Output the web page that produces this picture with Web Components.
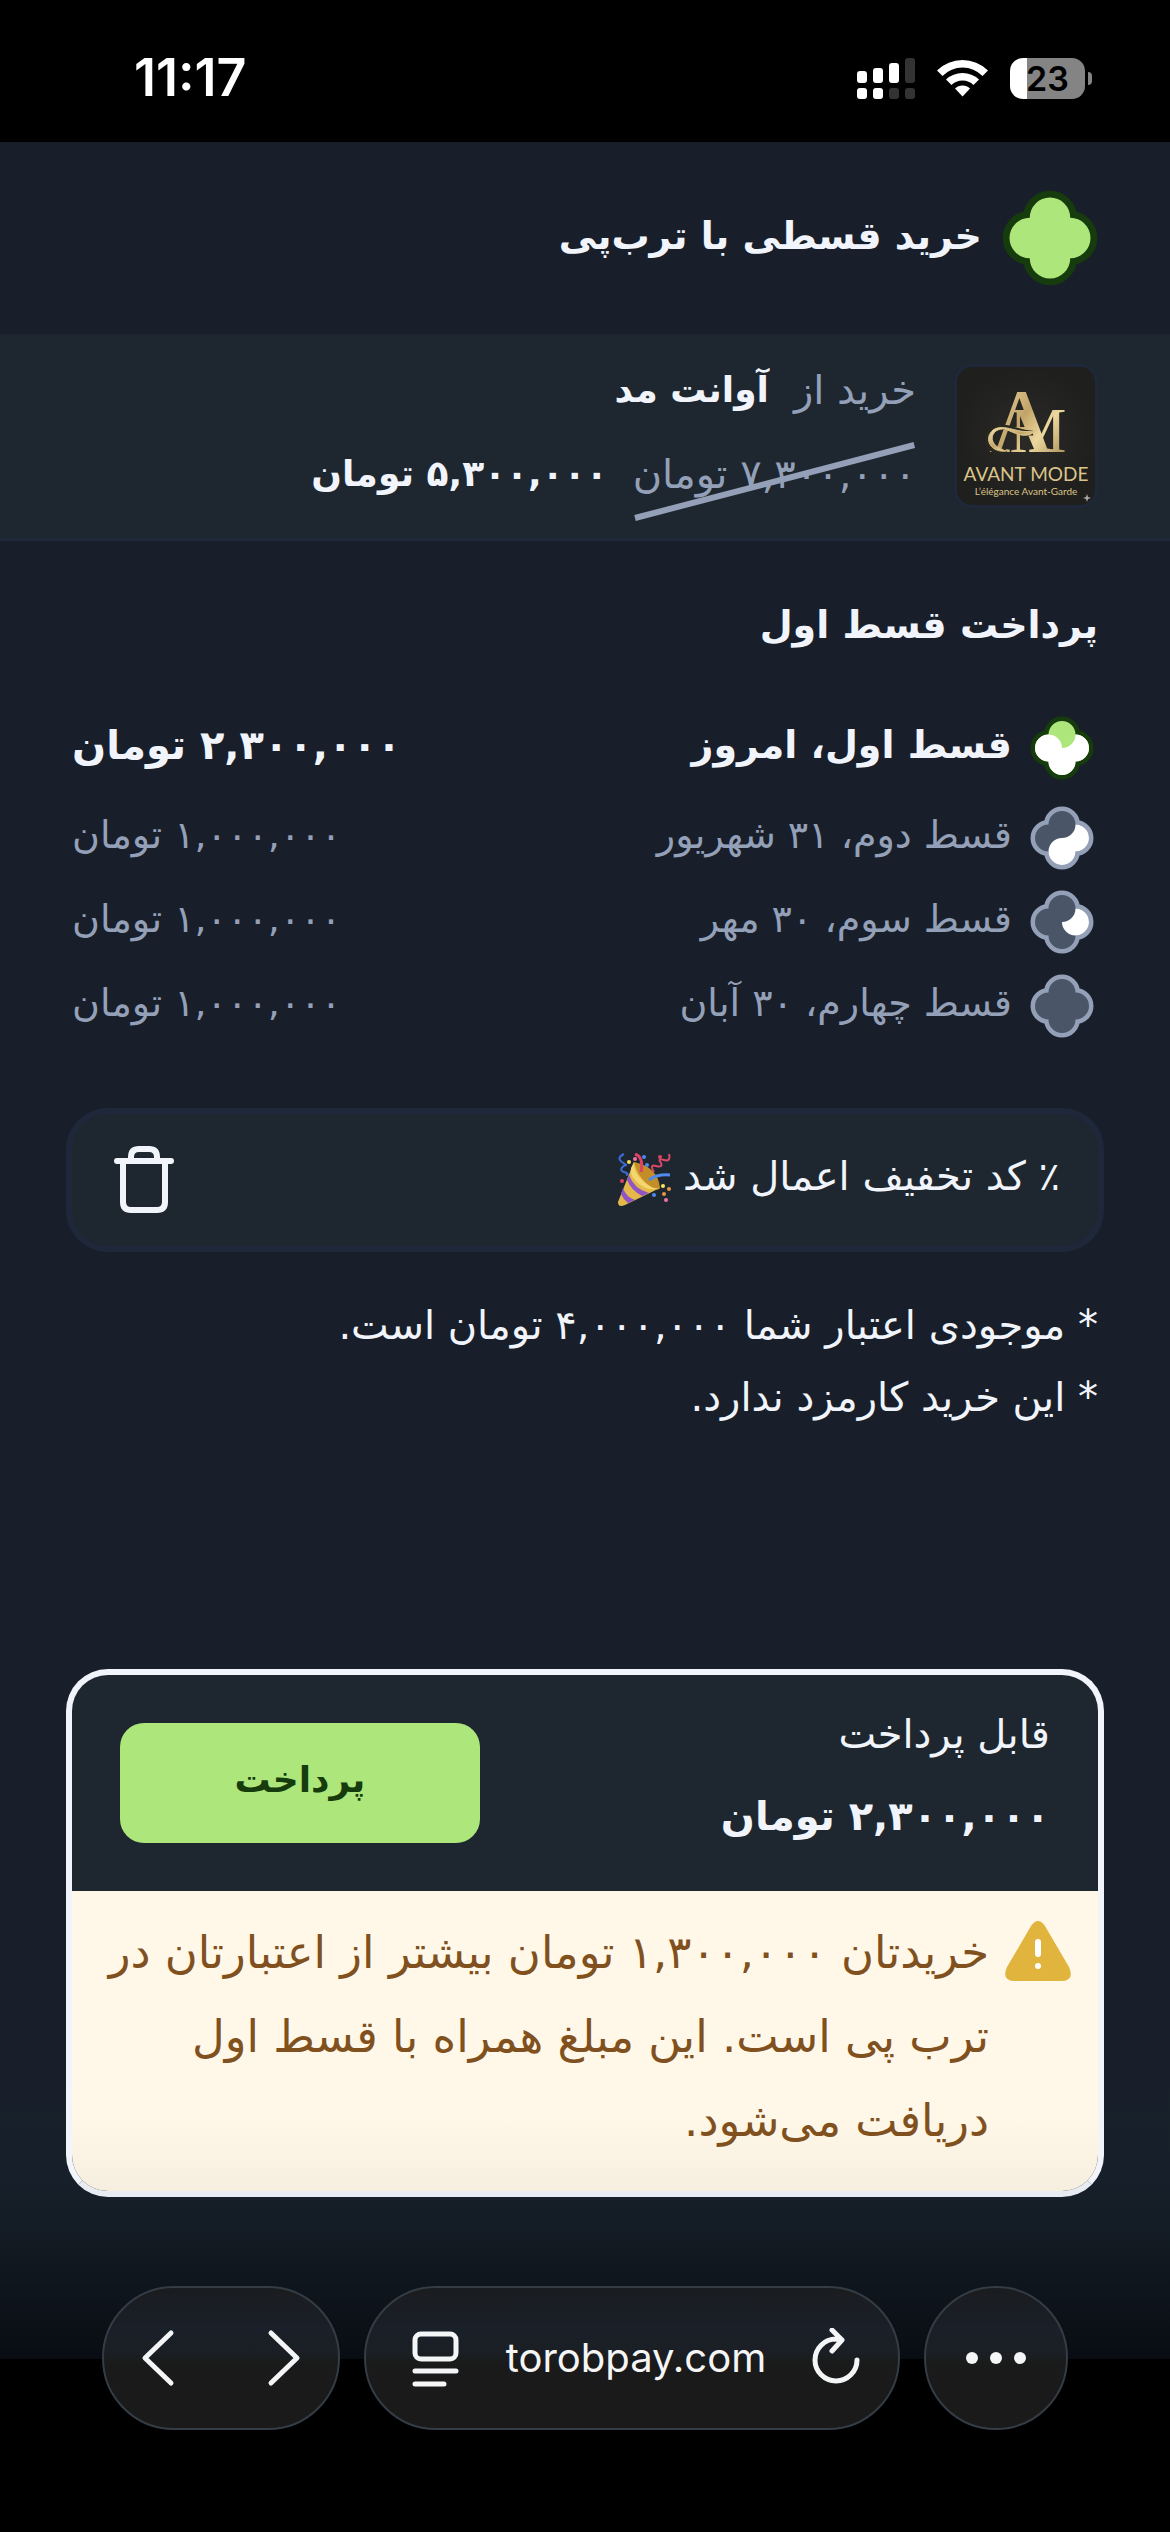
<!DOCTYPE html>
<html lang="fa" dir="rtl">
  <head>
    <meta charset="UTF-8" />
    <meta name="viewport" content="width=device-width, initial-scale=1.0" />
    <title>خرید قسطی با ترب‌پی</title>
    <style>
      :root {
        --page: #181f2a;
        --panel: #1e2730;
        --line: #1f283a;
        --text: #f1f5fb;
        --muted: #94a0b8;
        --green: #ade67a;
        --green-dark: #163b0c;
        --size-strong: 36px;
        --size-title: 38px;
        --size-body: 40px;
        --size-notice: 45px;
      }
      html {
        background: #000;
      }
      body {
        margin: 0;
        min-height: 100vh;
        display: flex;
        flex-direction: column;
        color: var(--text);
        font-family: 'DejaVu Sans', sans-serif;
        font-size: var(--size-body);
        line-height: 84px;
        background: linear-gradient(
          to top,
          #000 173px,
          #090d13 173px,
          #10171f 260px,
          #17202a 350px,
          var(--page) 480px
        );
      }
      main {
        flex: 1;
        display: flex;
        flex-direction: column;
        padding: 42px 66px 89px;
      }
      h2 {
        margin: 0 6px 33px;
        font-size: var(--size-title);
      }
    </style>
  </head>
  <body>
    <template id="status-bar">
      <style>
        :host {
          display: flex;
          align-items: center;
          justify-content: space-between;
          height: 142px;
          padding: 14px 78px 0 134px;
          box-sizing: border-box;
          direction: ltr;
          background: #000;
          color: #fff;
          font: 600 52px/60px Inter, sans-serif;
        }
        .icons {
          display: flex;
          align-items: center;
          gap: 22px;
        }
        .battery {
          display: flex;
          align-items: center;
          gap: 3px;
        }
        .level {
          width: 75px;
          height: 41px;
          border-radius: 13px;
          color: #000;
          font-size: 34px;
          line-height: 41px;
          text-align: center;
          background: linear-gradient(to right, #fff 17px, #848484 17px);
        }
        .cap {
          width: 4px;
          height: 13px;
          border-radius: 0 6px 6px 0;
          background: #848484;
        }
        svg {
          display: block;
        }
      </style>
      <span><slot></slot></span>
      <div class="icons">
        <svg width="58" height="41" fill="#fff" aria-hidden="true">
          <rect x="0" y="13" width="10" height="12" rx="3" />
          <rect x="16" y="10" width="10" height="15" rx="3" />
          <rect x="32" y="5" width="10" height="20" rx="3" />
          <rect x="48" y="0" width="10" height="25" rx="3" fill="#333" />
          <rect x="0" y="30" width="10" height="11" rx="3" />
          <rect x="16" y="30" width="10" height="11" rx="3" />
          <rect x="32" y="30" width="10" height="11" rx="3" fill="#333" />
          <rect x="48" y="30" width="10" height="11" rx="3" fill="#333" />
        </svg>
        <svg width="51" height="38" viewBox="0 0 51 38" fill="#fff" aria-hidden="true">
          <path d="M0 11.500Q11 1 25.500 1T51 11.500L45.500 17Q37 8.500 25.500 8.500T5.500 17Z" />
          <path d="M9 20.500Q16 14 25.500 14T42 20.500L36.500 26Q32 21.500 25.500 21.500T14.500 26Z" />
          <path d="M18 29.500Q21 26.500 25.500 26.500T33 29.500L25.500 37.500Z" />
        </svg>
        <div class="battery">
          <div class="level"><slot name="battery"></slot></div>
          <div class="cap"></div>
        </div>
      </div>
    </template>

    <template id="page-header">
      <style>
        :host {
          display: flex;
          align-items: center;
          gap: 20px;
          height: 192px;
          padding: 0 72px;
        }
        h1 {
          margin: 0 0 4px;
          font-size: var(--size-title);
        }
      </style>
      <clover-icon size="96"></clover-icon>
      <h1><slot></slot></h1>
    </template>

    <template id="store-summary">
      <style>
        :host {
          display: flex;
          align-items: center;
          gap: 38px;
          height: 207px;
          padding: 0 72px;
          box-sizing: border-box;
          background: var(--panel);
          border-top: 3px solid #1d2531;
          border-bottom: 3px solid var(--line);
        }
        .lines {
          padding-bottom: 12px;
          white-space: nowrap;
        }
        .line {
          display: flex;
          gap: 25px;
        }
        .muted {
          color: var(--muted);
        }
        b {
          font-size: var(--size-strong);
        }
        .old {
          position: relative;
          color: var(--muted);
        }
        .old svg {
          position: absolute;
          inset: 13px 2px 0;
          width: calc(100% - 4px);
          height: 73px;
          overflow: visible;
        }
      </style>
      <slot name="logo"></slot>
      <div class="lines">
        <div class="line">
          <span class="muted">خرید از</span>
          <b><slot name="name"></slot></b>
        </div>
        <div class="line">
          <span class="old">
            <slot name="old-price"></slot>
            <svg aria-hidden="true">
              <line x1="0" y1="100%" x2="100%" y2="0" stroke="#94a0b8" stroke-width="6" />
            </svg>
          </span>
          <b><slot name="price"></slot></b>
        </div>
      </div>
    </template>

    <template id="store-logo">
      <style>
        :host {
          display: block;
          flex: none;
          margin-bottom: 4px;
          line-height: 0;
          border: 3px solid var(--line);
          border-radius: 18px;
        }
        svg {
          border-radius: 15px;
          direction: ltr;
        }
      </style>
      <svg width="138" height="138" viewBox="0 0 138 138">
        <defs>
          <linearGradient id="gold" x1="0" y1="0" x2="1" y2="1">
            <stop offset="0" stop-color="#f5e6b4" />
            <stop offset="0.45" stop-color="#c3a569" />
            <stop offset="0.65" stop-color="#ecd89f" />
            <stop offset="1" stop-color="#94763f" />
          </linearGradient>
          <radialGradient id="leather">
            <stop offset="0" stop-color="#2b2a27" />
            <stop offset="1" stop-color="#1f1f1e" />
          </radialGradient>
        </defs>
        <rect width="138" height="138" fill="url(#leather)" />
        <text x="32" y="85" font-size="92" fill="url(#gold)" font-family="Liberation Serif, serif">
          A<tspan dx="-46" font-size="64">M</tspan>
        </text>
        <path
          d="M49 83C32 89 25 72 36 63C48 55 61 67 76 66"
          fill="none"
          stroke="#29271f"
          stroke-width="5"
        />
        <path
          d="M49 84C34 86 26 72 36 63C48 55 61 69 80 63C68 74 58 65 47 62C34 61 28 78 49 84Z"
          fill="url(#gold)"
          stroke="#dcc489"
        />
        <g fill="#dcc489" font-family="Lato, sans-serif" text-anchor="middle">
          <text x="69" y="114" font-size="19">AVANT MODE</text>
          <text x="69" y="128" font-size="10">L’élégance Avant-Garde</text>
        </g>
        <path d="M130 127l1 3 3 1-3 1-1 3-1-3-3-1 3-1Z" fill="#aaa" />
      </svg>
    </template>

    <template id="installment-row">
      <style>
        :host {
          display: flex;
          align-items: center;
          gap: 14px;
          height: 84px;
          padding: 0 6px;
          color: var(--muted);
          font-size: var(--size-title);
          white-space: nowrap;
        }
        :host([current]) {
          height: 96px;
          color: var(--text);
          font-weight: bold;
        }
        :host([current]) .amount {
          font-size: var(--size-body);
        }
        .date,
        .amount {
          padding-bottom: 6px;
        }
        .amount {
          margin-inline-start: auto;
        }
      </style>
      <clover-icon size="72"></clover-icon>
      <span class="date"><slot></slot></span>
      <span class="amount"><slot name="amount"></slot></span>
    </template>

    <template id="discount-box">
      <style>
        :host {
          display: flex;
          align-items: center;
          gap: 12px;
          height: 144px;
          margin-top: 60px;
          padding: 0 38px 0 36px;
          box-sizing: border-box;
          background: var(--panel);
          border: 6px solid var(--line);
          border-radius: 42px;
        }
        span {
          padding-bottom: 8px;
        }
        button {
          margin-inline-start: auto;
          padding: 0;
          border: 0;
          background: none;
          line-height: 0;
        }
      </style>
      <span><slot></slot></span>
      <svg width="54" height="54" viewBox="0 0 54 54" role="img" aria-label="جشن" fill="none">
        <path d="M17 9Q34 16 43 35L8 52Q1 55 1 49Z" fill="#e5b84b" />
        <path d="M17 9Q20 22 30 31T43 35Q41 14 17 9Z" fill="#c38d27" />
        <path d="M17 9Q16 19 26 28T43 35Q32 39 22 31T14 15Z" fill="#f3d66e" />
        <path d="M12 22Q17 36 32 40L25 43Q14 37 10 27Z" fill="#9055c4" />
        <path d="M6 35Q9 44 18 47L11 50Q6 46 4 41Z" fill="#9055c4" />
        <path d="M18 1Q27 4 24 19" stroke="#dc4263" stroke-width="3" />
        <path d="M32 27Q40 21 53 22" stroke="#4e8bed" stroke-width="3" />
        <path d="M7 1Q-1 5 5 9T8 12Q1 17 7 19T9 22" stroke="#3a6dd8" stroke-width="2" />
        <path d="M52 1Q54 9 47 7T44 10Q46 15 39 13T37 19" stroke="#dd4869" stroke-width="2" />
        <g>
          <circle cx="12" cy="9" r="2" fill="#f8e35f" />
          <circle cx="18" cy="6" r="2" fill="#ef76a8" />
          <circle cx="27" cy="4" r="2" fill="#4e8bed" />
          <circle cx="30" cy="12" r="2" fill="#4e8bed" />
          <circle cx="43" cy="4" r="2" fill="#dc4263" />
          <circle cx="5" cy="28" r="2" fill="#dc4263" />
          <circle cx="46" cy="33" r="2" fill="#f8e35f" />
          <circle cx="52" cy="36" r="2" fill="#e79542" />
          <circle cx="37" cy="42" r="2" fill="#4e8bed" />
          <circle cx="47" cy="41" r="2" fill="#e79542" />
          <circle cx="49" cy="47" r="2" fill="#ef76a8" />
        </g>
      </svg>
      <button type="button" aria-label="حذف کد تخفیف">
        <svg
          width="72"
          height="72"
          viewBox="0 0 72 72"
          fill="none"
          stroke="#f1f5fb"
          stroke-width="6"
          stroke-linecap="round"
        >
          <path d="M9 17H63M15 17V58Q15 66 23 66H49Q57 66 57 58V17" />
          <path d="M23 16V13Q23 5 31 5H41Q49 5 49 13V16" />
        </svg>
      </button>
    </template>

    <template id="credit-notes">
      <style>
        :host {
          display: block;
          margin: 37px 6px 48px;
          line-height: 72px;
        }
      </style>
      <slot></slot>
    </template>

    <template id="pay-card">
      <style>
        :host {
          display: block;
          margin-top: auto;
          overflow: hidden;
          background: var(--panel);
          border: 6px solid var(--text);
          border-bottom-color: #e8ebf1;
          border-radius: 42px;
        }
        .pay {
          display: flex;
          align-items: center;
          justify-content: space-between;
          padding: 0 48px;
        }
        .sum {
          padding: 18px 0 34px;
          line-height: 82px;
        }
        .total {
          display: block;
        }
        button {
          width: 360px;
          height: 120px;
          padding: 0 0 8px;
          border: 0;
          border-radius: 24px;
          background: var(--green);
          color: var(--green-dark);
          font: bold var(--size-strong) 'DejaVu Sans', sans-serif;
        }
        .notice {
          display: flex;
          gap: 16px;
          padding: 20px 27px 28px;
          color: #80511f;
          font-size: var(--size-notice);
          white-space: nowrap;
          background: linear-gradient(#fff8e8 75%, #f6efdf);
        }
        .notice svg {
          flex: none;
          margin-top: 10px;
        }
      </style>
      <div class="pay">
        <div class="sum">
          قابل پرداخت
          <b class="total"><slot name="total"></slot></b>
        </div>
        <button type="button">پرداخت</button>
      </div>
      <div class="notice">
        <svg width="66" height="60" viewBox="0 0 66 60" aria-hidden="true">
          <path d="M26 5Q33-5 40 5L64 46Q70 60 56 60H10Q-4 60 2 46Z" fill="#e1b43e" />
          <rect x="30" y="18" width="6" height="18" rx="3" fill="#fff" />
          <circle cx="33" cy="45" r="3" fill="#fff" />
        </svg>
        <div><slot></slot></div>
      </div>
    </template>

    <template id="browser-bar">
      <style>
        :host {
          display: flex;
          gap: 24px;
          height: 144px;
          padding: 0 102px 102px;
          direction: ltr;
          font: 40px/60px Inter, sans-serif;
        }
        .pill {
          display: flex;
          align-items: center;
          justify-content: space-between;
          box-sizing: border-box;
          border: 2px solid #343c45;
          border-radius: 72px;
          background: linear-gradient(#1a1c1f, #1a2029 30%, #1b1f25 45%, #1a1a1a 55%);
        }
        .nav {
          width: 238px;
          padding: 0 34px;
        }
        .address {
          flex: 1;
          padding: 0 35px 0 43px;
        }
        .more {
          width: 144px;
          justify-content: center;
        }
        button {
          padding: 0;
          border: 0;
          background: none;
          line-height: 0;
        }
        a {
          color: #f5f5f5;
          text-decoration: none;
        }
        svg {
          fill: none;
          stroke: #f4f5f7;
          stroke-width: 5;
          stroke-linecap: round;
          stroke-linejoin: round;
        }
        .dots {
          fill: #f4f5f7;
          stroke: none;
        }
      </style>
      <div class="pill nav">
        <button type="button" aria-label="Back">
          <svg width="38" height="60"><path d="M33 5L7 30L33 55" /></svg>
        </button>
        <button type="button" aria-label="Forward">
          <svg width="38" height="60"><path d="M5 5L31 30L5 55" /></svg>
        </button>
      </div>
      <div class="pill address">
        <button type="button" aria-label="Page menu">
          <svg width="54" height="60">
            <rect x="6" y="6" width="41" height="25" rx="6" />
            <path d="M6 43H47M6 56H35" />
          </svg>
        </button>
        <a href="#"><slot></slot></a>
        <button type="button" aria-label="Reload">
          <svg width="54" height="60">
            <path d="M27 11A21 21 0 1 0 48 32M23 2L33 12L23 23M27 11L33 12" />
          </svg>
        </button>
      </div>
      <button type="button" class="pill more" aria-label="More">
        <svg class="dots" width="64" height="12">
          <circle cx="8" cy="6" r="6" />
          <circle cx="32" cy="6" r="6" />
          <circle cx="56" cy="6" r="6" />
        </svg>
      </button>
    </template>

    <script>
      // white petals of the progress icon, by how many are left to pay
      const petals = {
        1: 'M0 0A13.500 13.500 0 0 0 13.500-13.500A13.500 13.500 0 0 1 13.500 13.500A13.500 13.500 0 0 1 0 0Z',
        2: 'M13.500-13.500A13.500 13.500 0 0 1 13.500 13.500A13.500 13.500 0 0 1-13.500 13.500A13.500 13.500 0 0 1 0 0A13.500 13.500 0 0 0 13.500-13.500Z',
        3: 'M13.500-13.500A13.500 13.500 0 0 1 13.500 13.500A13.500 13.500 0 0 1-13.500 13.500A13.500 13.500 0 0 1-13.500-13.500A13.500 13.500 0 0 1 0 0A13.500 13.500 0 0 0 13.500-13.500Z',
      }

      customElements.define(
        'clover-icon',
        class extends HTMLElement {
          connectedCallback() {
            if (this.shadowRoot) return
            const left = this.getRootNode().host.getAttribute('left')
            const green = left === null || left === '3'
            const size = this.getAttribute('size')
            // the header logo is drawn one and a half times as large
            const box = size === '96' ? 64 : 72
            this.attachShadow({ mode: 'open' }).innerHTML = `
              <style>
                :host { display: block; flex: none; line-height: 0; }
              </style>
              <svg width="${size}" height="${size}" viewBox="${-box / 2} ${-box / 2} ${box} ${box}" aria-hidden="true">
                <path
                  d="M-13.500-13.500A13.500 13.500 0 0 1 13.500-13.500A13.500 13.500 0 0 1 13.500 13.500A13.500 13.500 0 0 1-13.500 13.500A13.500 13.500 0 0 1-13.500-13.500Z"
                  fill="${green ? '#ade67a' : '#4a5568'}"
                  stroke="${green ? '#163b0c' : '#94a0b8'}"
                  stroke-width="9"
                  paint-order="stroke"
                />
                <path d="${petals[left] || ''}" fill="#fff" />
              </svg>`
          }
        }
      )

      // the other elements only clone their template
      const names = [
        'status-bar',
        'store-logo',
        'page-header',
        'store-summary',
        'installment-row',
        'discount-box',
        'credit-notes',
        'pay-card',
        'browser-bar',
      ]
      for (const name of names) {
        customElements.define(
          name,
          class extends HTMLElement {
            constructor() {
              super()
              const template = document.getElementById(name)
              this.attachShadow({ mode: 'open' }).appendChild(
                template.content.cloneNode(true)
              )
            }
          }
        )
      }
    </script>

    <status-bar>11:17<span slot="battery">23</span></status-bar>
    <page-header>خرید قسطی با ترب‌پی</page-header>
    <store-summary>
      <store-logo slot="logo"></store-logo>
      <span slot="name">آوانت مد</span>
      <span slot="old-price">۷,۳۰۰,۰۰۰ تومان</span>
      <span slot="price">۵,۳۰۰,۰۰۰ تومان</span>
    </store-summary>
    <main>
      <h2>پرداخت قسط اول</h2>
      <installment-row current left="3">
        قسط اول، امروز<span slot="amount">۲,۳۰۰,۰۰۰ تومان</span>
      </installment-row>
      <installment-row left="2">
        قسط دوم، ۳۱ شهریور<span slot="amount">۱,۰۰۰,۰۰۰ تومان</span>
      </installment-row>
      <installment-row left="1">
        قسط سوم، ۳۰ مهر<span slot="amount">۱,۰۰۰,۰۰۰ تومان</span>
      </installment-row>
      <installment-row left="0">
        قسط چهارم، ۳۰ آبان<span slot="amount">۱,۰۰۰,۰۰۰ تومان</span>
      </installment-row>
      <discount-box>٪ کد تخفیف اعمال شد</discount-box>
      <credit-notes>
        <div>* موجودی اعتبار شما ۴,۰۰۰,۰۰۰ تومان است.</div>
        <div>* این خرید کارمزد ندارد.</div>
      </credit-notes>
      <pay-card>
        <span slot="total">۲,۳۰۰,۰۰۰ تومان</span>
        خریدتان ۱,۳۰۰,۰۰۰ تومان بیشتر از اعتبارتان در<br />
        ترب پی است. این مبلغ همراه با قسط اول<br />
        دریافت می‌شود.
      </pay-card>
    </main>
    <browser-bar>torobpay.com</browser-bar>
  </body>
</html>
